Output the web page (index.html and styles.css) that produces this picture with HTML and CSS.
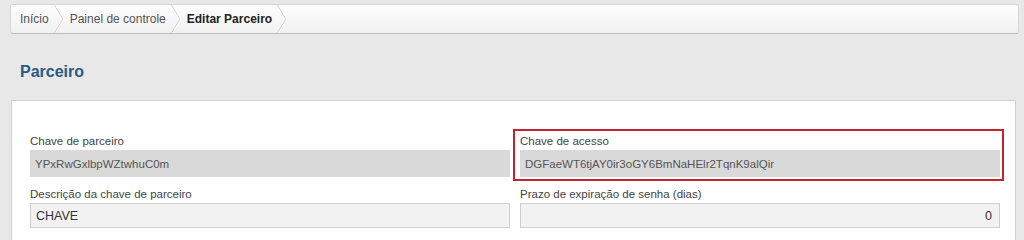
FILE: index.html
```html
<!DOCTYPE html>
<html lang="pt-BR">
<head>
    <meta charset="UTF-8">
    <meta name="viewport" content="width=device-width, initial-scale=1.0">
    <title>Editar Parceiro</title>
    <link rel="stylesheet" href="styles.css">
</head>
<body>
    <nav class="crumbs">
        <a class="crumb" href="#">Início</a>
        <svg class="sep" viewBox="0 0 10 28" width="10" height="28"><polyline points="0.5,0 9,14 0.5,28" fill="none" stroke="#cfcfcf" stroke-width="1"/><polyline points="1.5,0 10,14 1.5,28" fill="none" stroke="#ffffff" stroke-width="1"/></svg>
        <a class="crumb" href="#">Painel de controle</a>
        <svg class="sep" viewBox="0 0 10 28" width="10" height="28"><polyline points="0.5,0 9,14 0.5,28" fill="none" stroke="#cfcfcf" stroke-width="1"/><polyline points="1.5,0 10,14 1.5,28" fill="none" stroke="#ffffff" stroke-width="1"/></svg>
        <span class="crumb current">Editar Parceiro</span>
        <svg class="sep" viewBox="0 0 10 28" width="10" height="28"><polyline points="0.5,0 9,14 0.5,28" fill="none" stroke="#cfcfcf" stroke-width="1"/><polyline points="1.5,0 10,14 1.5,28" fill="none" stroke="#ffffff" stroke-width="1"/></svg>
    </nav>

    <h2 class="title">Parceiro</h2>

    <section class="panel">
        <div class="form-grid">
            <div class="field">
                <label>Chave de parceiro</label>
                <input class="input readonly" type="text" value="YPxRwGxlbpWZtwhuC0m" readonly>
            </div>
            <div class="field highlight">
                <label>Chave de acesso</label>
                <input class="input readonly" type="text" value="DGFaeWT6tjAY0ir3oGY6BmNaHElr2TqnK9alQir" readonly>
            </div>
            <div class="field">
                <label>Descrição da chave de parceiro</label>
                <input class="input" type="text" value="CHAVE">
            </div>
            <div class="field">
                <label>Prazo de expiração de senha (dias)</label>
                <input class="input number" type="text" value="0">
            </div>
        </div>
    </section>
</body>
</html>
```

FILE: styles.css
```css
*{
    box-sizing: border-box;
    font-family: 'Liberation Sans', Arial, sans-serif;
}
body{
    margin: 0;
    background: #e8e8e8;
    font-size: 12px;
    color: #333;
}
.crumbs{
    display: flex;
    align-items: center;
    height: 30px;
    margin: 4px 5px 0 10px;
    padding: 0 9px;
    background: linear-gradient(#fdfdfd, #f1f1f1);
    border: 1px solid #d6d6d6;
    border-bottom-color: #b9b9b9;
    border-radius: 3px;
}
.crumb{
    color: #555;
    text-decoration: none;
    font-size: 12px;
}
.crumb.current{
    color: #222;
    font-weight: bold;
}
.sep{
    margin: 0 6px 0 5px;
    flex: none;
}
.title{
    margin: 0;
    padding: 28px 0 0 20px;
    height: 66px;
    font-size: 16px;
    line-height: 20px;
    color: #2a5a84;
}
.panel{
    margin: 0 8px 0 11px;
    height: 200px;
    background: #fff;
    border: 1px solid #d2d2d2;
    padding: 33px 15px 0 18px;
}
.form-grid{
    display: grid;
    grid-template-columns: 1fr 1fr;
    column-gap: 10px;
    row-gap: 10px;
}
.field{
    display: flex;
    flex-direction: column;
    position: relative;
}
.field label{
    font-size: 11.5px;
    line-height: 15px;
    margin-bottom: 1px;
    color: #444;
}
.highlight::after{
    content: '';
    position: absolute;
    left: -7px;
    right: -4px;
    top: -5px;
    bottom: -4px;
    border: 2px solid #c42430;
}
.input{
    height: 25px;
    padding: 0 5px;
    font-size: 12.5px;
    color: #333;
    background: #f2f2f2;
    border: 1px solid #cfcfcf;
    outline: none;
}
.input.readonly{
    height: 27px;
    font-size: 11.5px;
    background: #d9d9d9;
    border: none;
    color: #555;
}
.input.number{
    text-align: right;
    padding-right: 7px;
}
```
